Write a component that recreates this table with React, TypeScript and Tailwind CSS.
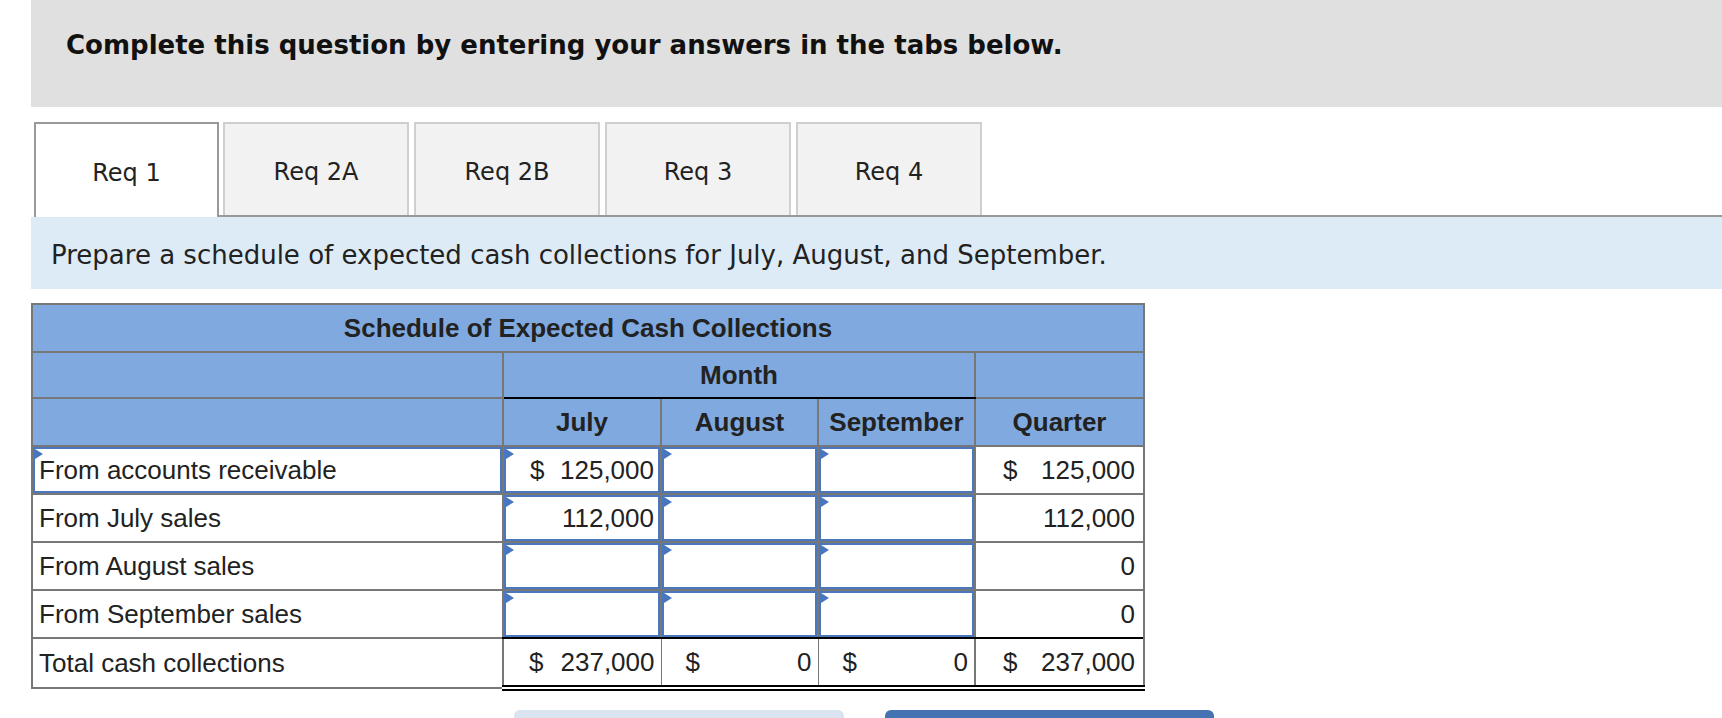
import React from "react";

const tabs = ["Req 1", "Req 2A", "Req 2B", "Req 3", "Req 4"];

type Row = {
  label: string;
  july?: string;
  julyDollar?: boolean;
  quarter: string;
  quarterDollar?: boolean;
};

const rows: Row[] = [
  { label: "From accounts receivable", july: "125,000", julyDollar: true, quarter: "125,000", quarterDollar: true },
  { label: "From July sales", july: "112,000", quarter: "112,000" },
  { label: "From August sales", quarter: "0" },
  { label: "From September sales", quarter: "0" },
];

function Marker() {
  return (
    <span className="absolute left-0 top-0 w-0 h-0 border-y-[5px] border-y-transparent border-l-[8px] border-l-[#4776bf]" />
  );
}

function InputBox({ value, dollar }: { value?: string; dollar?: boolean }) {
  return (
    <div className="relative h-[46px] border-2 border-[#4a78be] bg-white flex items-center justify-between pl-[24px] pr-[4px]">
      <Marker />
      <span>{dollar ? "$" : ""}</span>
      <span>{value ?? ""}</span>
    </div>
  );
}

export default function App() {
  return (
    <div className="w-[1722px] h-[718px] bg-white overflow-hidden">
      <div className="ml-[31px]">
        {/* Header */}
        <div className="h-[107px] bg-[#e0e0e0] pl-[35px] pt-[29px]">
          <h1 className="font-['DejaVu_Sans',sans-serif] font-bold text-[26px] leading-[32px] text-[#111]">
            Complete this question by entering your answers in the tabs below.
          </h1>
        </div>

        {/* Tabs */}
        <div className="mt-[15px] flex h-[95px] font-['DejaVu_Sans',sans-serif] text-[24px] text-[#222]">
          <div className="ml-[3px] w-[185px] h-full pt-[4px] bg-white border-2 border-b-0 border-[#999] flex items-center justify-center">
            {tabs[0]}
          </div>
          <div className="flex-1 flex gap-[5px] pl-[4px] border-b-2 border-[#999]">
            {tabs.slice(1).map((t) => (
              <div
                key={t}
                className="w-[186px] h-full pt-[4px] bg-[#f2f2f2] border-2 border-b-0 border-[#cfcfcf] flex items-center justify-center"
              >
                {t}
              </div>
            ))}
          </div>
        </div>

        {/* Instruction */}
        <div className="h-[72px] bg-[#ddebf7] pl-[20px] pt-[4px] flex items-center font-['DejaVu_Sans',sans-serif] text-[26px] text-[#222]">
          Prepare a schedule of expected cash collections for July, August, and September.
        </div>

        {/* Table */}
        <table className="mt-[14px] w-[1112px] table-fixed border-collapse font-['Liberation_Sans',Arial,sans-serif] text-[26px] text-[#222]">
          <colgroup>
            <col className="w-[471px]" />
            <col className="w-[158px]" />
            <col className="w-[157px]" />
            <col className="w-[157px]" />
            <col className="w-[169px]" />
          </colgroup>
          <thead className="bg-[#80aadf] font-bold">
            <tr className="h-[48px]">
              <th colSpan={5} className="border-2 border-[#777] text-center">
                Schedule of Expected Cash Collections
              </th>
            </tr>
            <tr className="h-[46px]">
              <th className="border-2 border-[#777]" />
              <th colSpan={3} className="border-2 border-[#777] border-b-[#000] text-center">
                Month
              </th>
              <th className="border-2 border-[#777]" />
            </tr>
            <tr className="h-[48px]">
              <th className="border-2 border-[#777]" />
              <th className="border-2 border-[#777] text-center">July</th>
              <th className="border-2 border-[#777] text-center">August</th>
              <th className="border-2 border-[#777] text-center">September</th>
              <th className="border-2 border-[#777] text-center">Quarter</th>
            </tr>
          </thead>
          <tbody>
            {rows.map((r, i) => (
              <tr key={r.label}>
                <td className="border-2 border-[#777] p-0">
                  {i === 0 ? (
                    <div className="relative h-[46px] border-2 border-[#4a78be] flex items-center pl-[4px]">
                      <Marker />
                      {r.label}
                    </div>
                  ) : (
                    <div className="h-[46px] flex items-center pl-[6px]">{r.label}</div>
                  )}
                </td>
                <td className="border-2 border-[#777] p-0">
                  <InputBox value={r.july} dollar={r.julyDollar} />
                </td>
                <td className="border-2 border-[#777] p-0">
                  <InputBox />
                </td>
                <td className="border-2 border-[#777] p-0">
                  <InputBox />
                </td>
                <td className="border-2 border-[#777] p-0">
                  <div className="h-[46px] flex items-center justify-between pl-[27px] pr-[8px]">
                    <span>{r.quarterDollar ? "$" : ""}</span>
                    <span>{r.quarter}</span>
                  </div>
                </td>
              </tr>
            ))}
            <tr className="h-[50px]">
              <td className="border-2 border-[#777] pl-[6px]">Total cash collections</td>
              <td className="border-x border-[#777] border-t-2 border-t-black border-b-[6px] border-b-black border-double p-0">
                <div className="flex justify-between pl-[25px] pr-[6px]">
                  <span>$</span>
                  <span>237,000</span>
                </div>
              </td>
              <td className="border-x border-[#777] border-t-2 border-t-black border-b-[6px] border-b-black border-double p-0">
                <div className="flex justify-between pl-[24px] pr-[6px]">
                  <span>$</span>
                  <span>0</span>
                </div>
              </td>
              <td className="border-x border-[#777] border-t-2 border-t-black border-b-[6px] border-b-black border-double p-0">
                <div className="flex justify-between pl-[24px] pr-[6px]">
                  <span>$</span>
                  <span>0</span>
                </div>
              </td>
              <td className="border-x-2 border-[#777] border-t-2 border-t-black border-b-[6px] border-b-black border-double p-0">
                <div className="flex justify-between pl-[27px] pr-[8px]">
                  <span>$</span>
                  <span>237,000</span>
                </div>
              </td>
            </tr>
          </tbody>
        </table>
      </div>

      {/* Buttons (partially visible) */}
      <div className="mt-[19px] flex">
        <div className="ml-[514px] w-[330px] h-[20px] rounded-t-[6px] bg-[#d9e4f0]" />
        <div className="ml-[41px] w-[329px] h-[20px] rounded-t-[6px] bg-[#4573b2]" />
      </div>
    </div>
  );
}
